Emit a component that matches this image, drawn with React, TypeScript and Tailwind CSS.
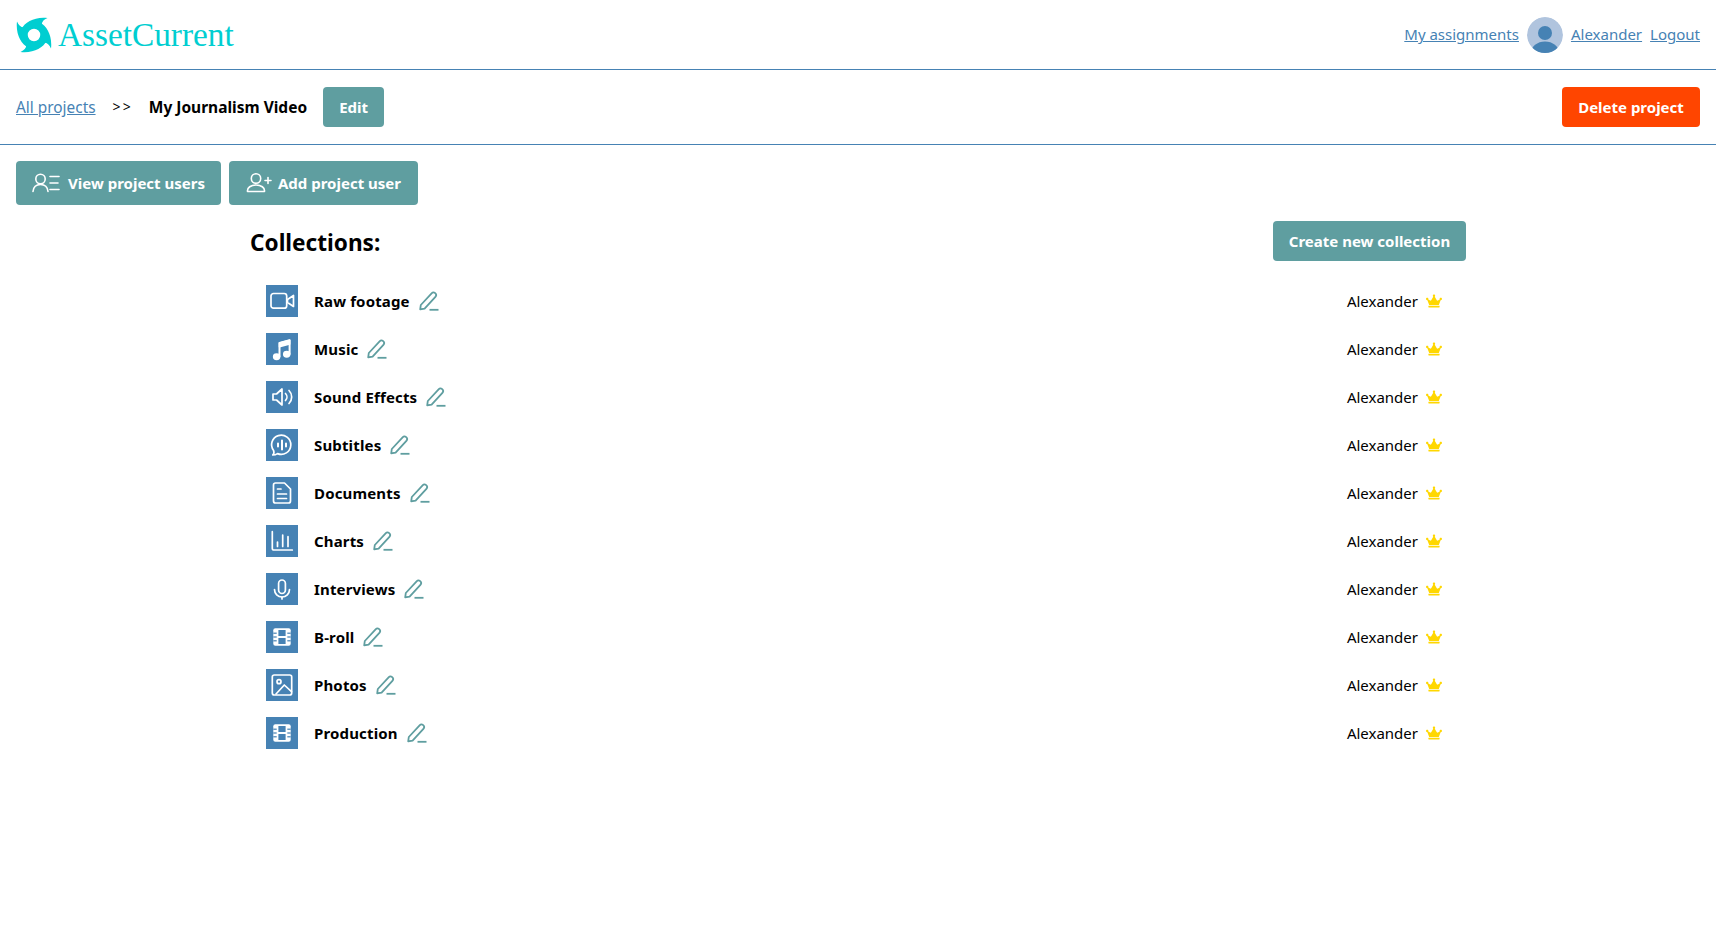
import type { ReactNode } from 'react';
import { FaCrown } from 'react-icons/fa';

function Logo() {
  const arm = 'M5.5 12 C9 5 19 -0.5 31.5 1 C27 3 25 5.5 26 10 L18 9.5 Z';
  return (
    <svg viewBox="0 0 36 36" className="w-9 h-9 text-[#00ced1]" fill="currentColor">
      <path d={arm} />
      <path d={arm} transform="rotate(90 18 18)" />
      <path d={arm} transform="rotate(180 18 18)" />
      <path d={arm} transform="rotate(270 18 18)" />
      <circle cx="18" cy="18" r="9.5" fill="none" stroke="currentColor" strokeWidth="6.5" />
    </svg>
  );
}

function Avatar() {
  return (
    <svg viewBox="0 0 36 36" className="w-9 h-9 mx-2 rounded-full">
      <circle cx="18" cy="18" r="18" fill="#b0c4de" />
      <circle cx="18" cy="16" r="7" fill="#4682b4" />
      <ellipse cx="18" cy="36" rx="14" ry="11.5" fill="#4682b4" />
    </svg>
  );
}

function Glyph({ children }: { children: ReactNode }) {
  return (
    <svg viewBox="0 0 32 32" className="w-8 h-8" fill="none" stroke="currentColor" strokeWidth="1.7" strokeLinecap="round" strokeLinejoin="round">
      {children}
    </svg>
  );
}

function FilmGlyph() {
  return (
    <svg viewBox="0 0 32 32" className="w-8 h-8">
      <rect x="7.3" y="7.3" width="17.4" height="17.4" rx="2" fill="#fff" />
      <g fill="#4682b4">
        <rect x="12.4" y="9" width="7.2" height="6" />
        <rect x="12.4" y="17" width="7.2" height="6" />
        <rect x="7.3" y="11.6" width="3.4" height="1.2" />
        <rect x="7.3" y="15.4" width="3.4" height="1.2" />
        <rect x="7.3" y="19.2" width="3.4" height="1.2" />
        <rect x="21.3" y="11.6" width="3.4" height="1.2" />
        <rect x="21.3" y="15.4" width="3.4" height="1.2" />
        <rect x="21.3" y="19.2" width="3.4" height="1.2" />
      </g>
    </svg>
  );
}

function EditIcon() {
  return (
    <svg viewBox="0 0 20 20" className="w-5 h-5 text-[#5f9ea0]" fill="none" stroke="currentColor" strokeWidth="1.8" strokeLinecap="round" strokeLinejoin="round">
      <path d="M1.2 18.4 L1.8 14 L12.6 2.4 A2.4 2.4 0 0 1 16.4 5.8 L5.6 17.6 Z" />
      <path d="M10.5 18.8 H19.5" strokeLinecap="butt" />
    </svg>
  );
}

function ViewUsersIcon() {
  return (
    <svg viewBox="0 0 28 20" className="w-7 h-5" fill="none" stroke="currentColor" strokeWidth="1.6" strokeLinecap="round">
      <circle cx="8.5" cy="6" r="4.7" />
      <path d="M1 18.5 C1.5 13.5 4.5 11.5 8.5 11.5 C12.5 11.5 15.5 13.5 16 18.5" />
      <path d="M18 3.5H27M18 10H26M18 16.5H27" />
    </svg>
  );
}

function AddUserIcon() {
  return (
    <svg viewBox="0 0 26 20" className="w-[26px] h-5" fill="none" stroke="currentColor" strokeWidth="1.6" strokeLinecap="round" strokeLinejoin="round">
      <circle cx="10" cy="5.5" r="4.7" />
      <path d="M1.5 18.5 C1 14.5 5 12 10 12 C15 12 19 14.5 18.5 18.5 Z" />
      <path d="M19 7.5H25M22 4.5V10.5" />
    </svg>
  );
}

interface Collection {
  name: string;
  icon: ReactNode;
}

const collections: Collection[] = [
  {
    name: 'Raw footage',
    icon: (
      <Glyph>
        <rect x="5" y="8.5" width="15.7" height="14.7" rx="2.5" />
        <path d="M21.5 14.5 L27.5 10.5 V21.5 L21.5 17.5 Z" />
      </Glyph>
    ),
  },
  {
    name: 'Music',
    icon: (
      <Glyph>
        <path d="M13.5 23.5 V10 L23.6 7.2 V21" strokeWidth="2" />
        <path d="M13.5 10 L23.6 7.2 V11 L13.5 13.8 Z" fill="currentColor" />
        <ellipse cx="10.6" cy="23.7" rx="2.9" ry="2.6" fill="currentColor" />
        <ellipse cx="20.7" cy="21.3" rx="2.9" ry="2.6" fill="currentColor" />
      </Glyph>
    ),
  },
  {
    name: 'Sound Effects',
    icon: (
      <Glyph>
        <path d="M7 13 H10.5 L16 8 V24 L10.5 19 H7 Z" />
        <path d="M19.5 12.5 a5 5 0 0 1 0 7" />
        <path d="M23 9.5 a9.2 9.2 0 0 1 0 13" />
      </Glyph>
    ),
  },
  {
    name: 'Subtitles',
    icon: (
      <Glyph>
        <path d="M6.8 26 C8 25 8.4 24 7.6 21.6 A9.6 9.6 0 1 1 11.5 24.6 C10 25.6 8.5 26 6.8 26 Z" />
        <path d="M12 14.5 V17.5 M16 11.5 V20.5 M20 14.5 V17.5" strokeWidth="2" />
      </Glyph>
    ),
  },
  {
    name: 'Documents',
    icon: (
      <Glyph>
        <path d="M9.5 6 H18.5 L24.5 12 V24 a2 2 0 0 1 -2 2 H9.5 a2 2 0 0 1 -2 -2 V8 a2 2 0 0 1 2 -2 Z" />
        <path d="M11.5 12 H15 M11.5 17 H20.5 M11.5 21.5 H20.5" />
      </Glyph>
    ),
  },
  {
    name: 'Charts',
    icon: (
      <Glyph>
        <path d="M6.3 6.7 V23.5 a1.5 1.5 0 0 0 1.5 1.5 H26.3" />
        <path d="M11.5 17 V21.5 M16.7 10 V21.5 M22 11.7 V21.5" />
      </Glyph>
    ),
  },
  {
    name: 'Interviews',
    icon: (
      <Glyph>
        <rect x="12.6" y="7" width="6.8" height="13.5" rx="3.4" />
        <path d="M8.5 16.5 a7.5 7.5 0 0 0 15 0" />
        <path d="M16 24 V26" />
      </Glyph>
    ),
  },
  { name: 'B-roll', icon: <FilmGlyph /> },
  {
    name: 'Photos',
    icon: (
      <Glyph>
        <rect x="6.3" y="6" width="19.4" height="20" rx="2" />
        <circle cx="13" cy="12.7" r="2" />
        <path d="M10 25 L18.3 16 L25.5 22.7" />
      </Glyph>
    ),
  },
  { name: 'Production', icon: <FilmGlyph /> },
];

export default function App() {
  return (
    <div className="min-h-screen bg-white text-black text-[15px] font-['Noto_Sans',sans-serif]">
      <header className="flex items-center justify-between h-[70px] px-4 border-b border-[#4682b4]">
        <div className="flex items-center gap-[6px]">
          <Logo />
          <span className="pt-px text-[33.3px] text-[#00ced1] font-['Liberation_Serif',serif]">AssetCurrent</span>
        </div>
        <div className="flex items-center text-[#4682b4]">
          <a className="underline" href="#">My assignments</a>
          <Avatar />
          <a className="underline" href="#">Alexander</a>
          <a className="underline ml-2" href="#">Logout</a>
        </div>
      </header>

      <div className="flex items-center justify-between h-[75px] px-4 border-b border-[#4682b4]">
        <div className="flex items-center">
          <a className="pt-0.5 underline text-[15.4px] text-[#4682b4]" href="#">All projects</a>
          <span className="ml-[17px] text-sm tracking-[0.15em]">&gt;&gt;</span>
          <span className="ml-[16px] pt-0.5 text-[15.5px] font-bold">My Journalism Video</span>
          <button className="ml-4 h-10 w-[61px] rounded bg-[#5f9ea0] text-white font-bold">Edit</button>
        </div>
        <button className="h-10 w-[138px] rounded bg-[#ff4500] text-white font-bold">Delete project</button>
      </div>

      <div className="flex gap-2 px-4 pt-4">
        <button className="flex items-center justify-center gap-2 h-11 w-[205px] rounded bg-[#5f9ea0] text-white font-bold">
          <ViewUsersIcon />
          View project users
        </button>
        <button className="flex items-center justify-center gap-[6px] h-11 w-[189px] rounded bg-[#5f9ea0] text-white font-bold">
          <AddUserIcon />
          Add project user
        </button>
      </div>

      <main className="ml-[250px] w-[1216px] mt-4">
        <div className="flex items-start justify-between pb-3">
          <h2 className="text-[22.6px] font-bold leading-[44px]">Collections:</h2>
          <button className="h-10 w-[193px] rounded bg-[#5f9ea0] text-white font-bold">Create new collection</button>
        </div>
        <ul>
          {collections.map((c) => (
            <li key={c.name} className="flex items-center justify-between h-12 pl-4 pr-6">
              <div className="flex items-center">
                <div className="w-8 h-8 bg-[#4682b4] text-white">{c.icon}</div>
                <span className="ml-4 font-bold tracking-[0.01em]">{c.name}</span>
                <span className="ml-[9px]"><EditIcon /></span>
              </div>
              <div className="flex items-center gap-2">
                <span>Alexander</span>
                <FaCrown className="w-4 h-4 text-[#ffd700]" />
              </div>
            </li>
          ))}
        </ul>
      </main>
    </div>
  );
}
